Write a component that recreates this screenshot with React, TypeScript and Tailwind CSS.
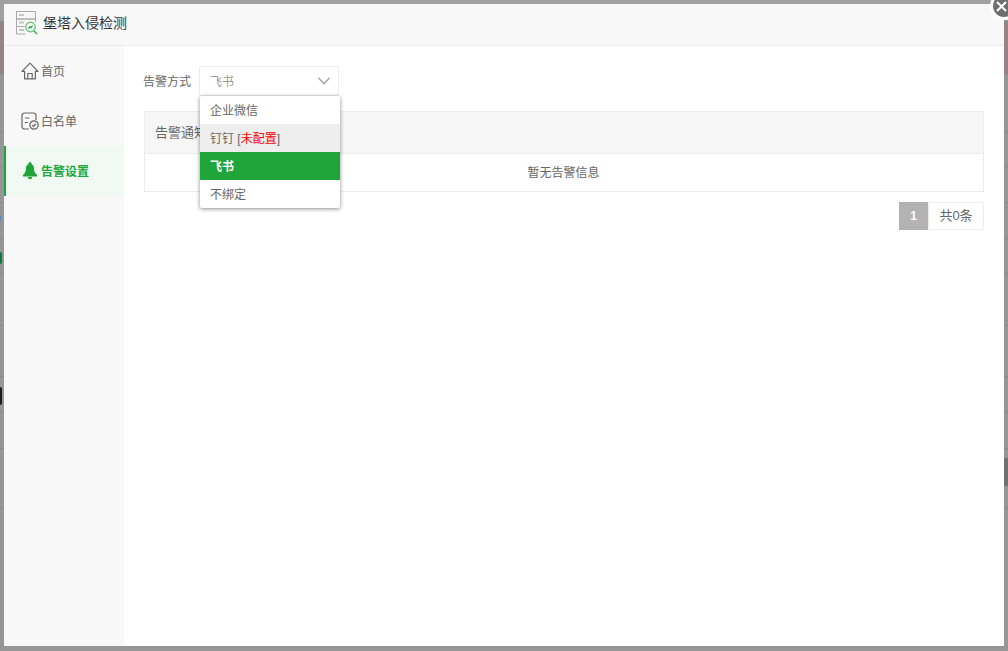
import { useState } from "react";

const font = { fontFamily: '"Liberation Sans", "Noto Sans CJK SC", sans-serif' };

function HomeIcon() {
  return (
    <svg width="18" height="18" viewBox="0 0 18 18" fill="none" stroke="#666" strokeWidth="1.2" strokeLinejoin="round">
      <path d="M9 1.200 1 9.300h2.600V16.800h10.800V9.300H17z" />
      <path d="M6.800 16.800v-5.300h4.400v5.300" />
    </svg>
  );
}

function ListIcon() {
  return (
    <svg width="18" height="18" viewBox="0 0 18 18" fill="none" stroke="#666" strokeWidth="1.2">
      <path d="M8 17H3.500A2.500 2.500 0 0 1 1 14.500v-11A2.500 2.500 0 0 1 3.500 1h9A2.500 2.500 0 0 1 15 3.500V8" />
      <path d="M4 6h4.500M4 10.500h3" />
      <circle cx="13" cy="13" r="4.200" fill="#eeeeee" />
      <path d="M11.200 13.100l1.300 1.300 2.300-2.600" />
    </svg>
  );
}

function BellIcon() {
  return (
    <svg width="16" height="18" viewBox="0 0 16 18" fill="#20a53a">
      <circle cx="8" cy="1.500" r="1.500" />
      <path d="M8 1.800c-2.800 0-4 2.400-4 5 0 2.800-1.200 4.600-3 6.200v1.500h14V13c-1.800-1.600-3-3.400-3-6.200 0-2.600-1.200-5-4-5z" />
      <path d="M5.800 15h4.400a2.200 2.200 0 0 1-4.400 0z" />
    </svg>
  );
}

function LogoIcon() {
  return (
    <svg width="22" height="24" viewBox="0 0 22 24" fill="none">
      <path d="M.5.500h19v7.500H.5zM.5 8h19M19.500 8v3M.5 8v7.500h8M.5 15.500V23h9" stroke="#aaa" />
      <path d="M3 4h5M3 11.500h5M3 19h5" stroke="#c4c4c4" strokeWidth="2" />
      <circle cx="14.500" cy="16" r="4.800" stroke="#5cbf72" strokeWidth="1.200" />
      <path d="M12.500 17.500l1.500-1.800 1 1 1.500-2.200M18 20l3 3" stroke="#20a53a" strokeWidth="1.200" />
    </svg>
  );
}

const menu = [
  { label: "首页", icon: <HomeIcon /> },
  { label: "白名单", icon: <ListIcon /> },
  { label: "告警设置", icon: <BellIcon />, active: true },
];

// blurred page behind the modal, only its rows show at the edges
const backdropRows = [58, 34, 36, 36, 35, 52, 51, 36, 36, 60];

export default function App() {
  const [channel] = useState("飞书");

  return (
    <div style={font} className="relative h-[651px] w-[1008px] overflow-hidden bg-[#969696] p-[4px] text-xs text-[#666666]">
      <div className="absolute inset-0 flex flex-col">
        <div className="h-[21px] shrink-0 bg-[#a0a0a0]" />
        <div className="h-[54px] shrink-0 bg-[#978585]" />
        {backdropRows.map((h, i) => (
          <div key={i} className="shrink-0 border-b border-[#8a8a8a]" style={{ height: h }} />
        ))}
      </div>
      <div className="absolute left-0 top-[252px] h-[12px] w-[2px] rounded-r-full bg-[#0d7a3a]" />
      <div className="absolute left-0 top-[216px] h-[5px] w-[1px] bg-[#5a86b8]" />
      <div className="absolute left-0 top-[387px] h-[18px] w-[2px] rounded-r-sm bg-[#1c1c1c]" />
      <div className="absolute right-0 top-[458px] h-[28px] w-[4px] bg-[#707070]" />

      <div className="relative flex h-[642px] w-[1000px] flex-col bg-white">
        <div className="flex h-[42px] shrink-0 items-center gap-[5px] border-b border-[#ececec] bg-[#f8f8f8] pb-[3px] pl-[12px]">
          <LogoIcon />
          <span className="text-[14px] text-[#333333]">堡塔入侵检测</span>
        </div>

        <div className="flex min-h-0 flex-1">
          <div className="w-[120px] shrink-0 bg-[#f8f8f8]">
            {menu.map((m) => (
              <div
                key={m.label}
                className={
                  m.active
                    ? "flex h-[50px] items-center gap-[3px] border-l-2 border-[#20a53a] bg-[#f0f9f2] pl-[16px] font-bold text-[#20a53a]"
                    : "flex h-[50px] items-center gap-[2px] pl-[17px] text-[#666666]"
                }
              >
                {m.icon}
                <span className="pt-[2px]">{m.label}</span>
              </div>
            ))}
          </div>

          <div className="flex-1 px-[20px] pt-[20px]">
            <div className="relative flex h-[30px] items-center">
              <span className="ml-[-1px] w-[56px] pt-[2px]">告警方式</span>
              <div className="flex h-[30px] w-[140px] items-center justify-between rounded-[2px] border border-[#ececec] pl-[10px] pr-[7px] text-[#999999]">
                <span className="pt-[2px]">{channel}</span>
                <svg width="14" height="8" viewBox="0 0 14 8" fill="none" stroke="#aaa" strokeWidth="1.600">
                  <path d="M1.500 1 7 6.500 12.500 1" />
                </svg>
              </div>

              <div className="absolute left-[56px] top-[30px] z-10 w-[140px] rounded-[2px] bg-white shadow-[0_1px_4px_rgba(0,0,0,0.45)]">
                <div className="h-[28px] px-[10px] leading-[30px]">企业微信</div>
                <div className="h-[28px] whitespace-pre bg-[#eeeeee] px-[10px] leading-[30px]">
                  钉钉 [<span className="text-[#ff0000]">未配置</span>]
                </div>
                <div className="h-[28px] bg-[#20a53a] px-[10px] font-bold leading-[30px] text-white">飞书</div>
                <div className="h-[28px] px-[10px] leading-[30px]">不绑定</div>
              </div>
            </div>

            <div className="mt-[15px] border border-[#ececec]">
              <div className="flex h-[42px] items-center border-b border-[#ececec] bg-[#f6f6f6] px-[10px] text-[13px]">告警通知</div>
              <div className="flex h-[37px] items-center justify-center pr-[1px]">暂无告警信息</div>
            </div>

            <div className="mt-[10px] flex justify-end">
              <span className="flex h-[28px] w-[29px] items-center justify-center bg-[#b3b3b3] font-bold text-white">1</span>
              <span className="flex h-[28px] w-[56px] items-center justify-center border border-[#ececec] text-[13px] text-[#666666]">共0条</span>
            </div>
          </div>
        </div>
      </div>

      <div className="absolute right-[-10px] top-[-8px] flex h-[28px] w-[28px] items-center justify-center rounded-full border-[3px] border-white bg-[#6f6f6f]">
        <svg width="11" height="11" viewBox="0 0 11 11" stroke="#fff" strokeWidth="2" className="ml-[-5px]">
          <path d="M1 1l9 9M10 1 1 10" />
        </svg>
      </div>
    </div>
  );
}
